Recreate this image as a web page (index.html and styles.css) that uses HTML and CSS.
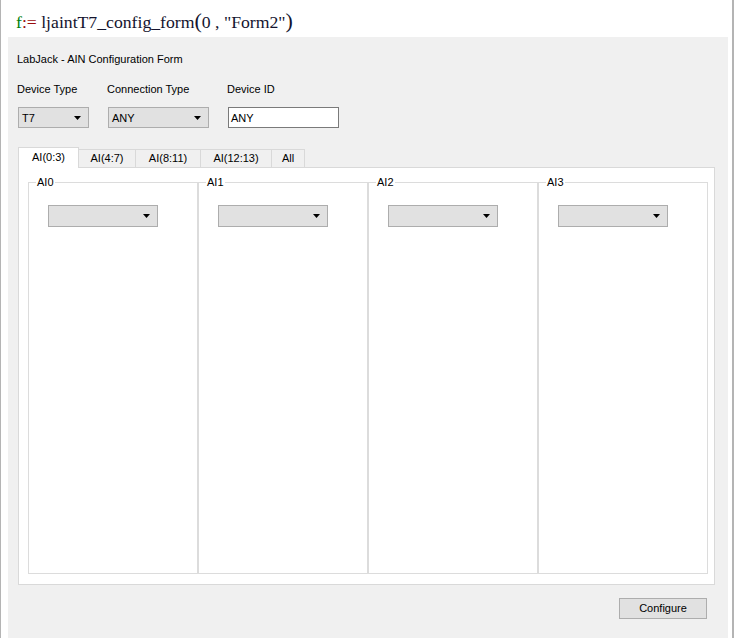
FILE: index.html
```html
<!DOCTYPE html>
<html lang="en">
<head>
    <meta charset="UTF-8">
    <title>LabJack AIN Configuration Form</title>
    <link rel="stylesheet" href="styles.css">
</head>
<body>
    <div class="sheet">
        <div class="region">
            <span class="var">f</span><span class="def">:=</span> ljaintT7_config_form<span class="paren">(</span>0 , "Form2"<span class="paren">)</span>
        </div>
        <div class="form">
            <div class="form-title">LabJack - AIN Configuration Form</div>
            <div class="fields">
                <div class="field col1">
                    <div class="label">Device Type</div>
                    <div class="combo small">
                        <span>T7</span>
                        <svg class="arrow" width="7" height="4" viewBox="0 0 7 4"><polygon points="0,0 7,0 3.5,4" fill="#000"/></svg>
                    </div>
                </div>
                <div class="field col2">
                    <div class="label">Connection Type</div>
                    <div class="combo medium">
                        <span>ANY</span>
                        <svg class="arrow" width="7" height="4" viewBox="0 0 7 4"><polygon points="0,0 7,0 3.5,4" fill="#000"/></svg>
                    </div>
                </div>
                <div class="field col3">
                    <div class="label">Device ID</div>
                    <div class="textbox">ANY</div>
                </div>
            </div>

            <div class="tabs">
                <div class="tab active" style="width: 61px">AI(0:3)</div>
                <div class="tab" style="width: 58px">AI(4:7)</div>
                <div class="tab" style="width: 66px">AI(8:11)</div>
                <div class="tab" style="width: 72px">AI(12:13)</div>
                <div class="tab" style="width: 34px">All</div>
            </div>
            <div class="tab-page">
                <fieldset class="group">
                    <legend>AI0</legend>
                    <div class="combo wide"><svg class="arrow" width="7" height="4" viewBox="0 0 7 4"><polygon points="0,0 7,0 3.5,4" fill="#000"/></svg></div>
                </fieldset>
                <fieldset class="group">
                    <legend>AI1</legend>
                    <div class="combo wide"><svg class="arrow" width="7" height="4" viewBox="0 0 7 4"><polygon points="0,0 7,0 3.5,4" fill="#000"/></svg></div>
                </fieldset>
                <fieldset class="group">
                    <legend>AI2</legend>
                    <div class="combo wide"><svg class="arrow" width="7" height="4" viewBox="0 0 7 4"><polygon points="0,0 7,0 3.5,4" fill="#000"/></svg></div>
                </fieldset>
                <fieldset class="group">
                    <legend>AI3</legend>
                    <div class="combo wide"><svg class="arrow" width="7" height="4" viewBox="0 0 7 4"><polygon points="0,0 7,0 3.5,4" fill="#000"/></svg></div>
                </fieldset>
            </div>
            <div class="actions">
                <div class="button">Configure</div>
            </div>
        </div>
    </div>
</body>
</html>
```

FILE: styles.css
```css
body {
    margin: 0;
    padding: 0;
    background: #fff;
    font-family: "Liberation Sans", Arial, sans-serif;
    font-size: 11px;
    color: #000;
}
.sheet {
    width: 731px;
    height: 638px;
    border-left: 1px solid #b4b4b4;
    border-right: 2px solid #b4b4b4;
    overflow: hidden;
}
.region {
    height: 37px;
    box-sizing: border-box;
    padding: 10px 0 0 15px;
    font-family: "Liberation Serif", "Times New Roman", serif;
    font-size: 17.7px;
    line-height: 22px;
    color: #14142e;
    white-space: nowrap;
}
.region .var {
    color: #00800a;
}
.region .def {
    color: #9a0c0c;
}
.region .paren {
    font-size: 22px;
}
.form {
    margin-left: 7px;
    width: 720px;
    height: 601px;
    box-sizing: border-box;
    padding: 16px 13px 0 10px;
    background: #f0f0f0;
}
.form-title {
    height: 13px;
    line-height: 13px;
    margin-left: -1px;
}
.fields {
    display: flex;
    margin-top: 17px;
    margin-left: -1px;
}
.field.col1 {
    width: 90px;
}
.field.col2 {
    width: 120px;
}
.label {
    height: 13px;
    line-height: 13px;
    margin-bottom: 11px;
}
.combo {
    position: relative;
    height: 21px;
    box-sizing: border-box;
    margin-left: 1px;
    padding-left: 3px;
    background: #e1e1e1;
    border: 1px solid #adadad;
    line-height: 20px;
}
.combo .arrow {
    position: absolute;
    right: 7px;
    top: 8px;
}
.combo.small {
    width: 71px;
}
.combo.medium {
    width: 101px;
}
.combo.wide {
    width: 110px;
    height: 22px;
    margin: 16px 0 0 19px;
}
.textbox {
    width: 111px;
    height: 21px;
    box-sizing: border-box;
    margin-left: 1px;
    padding-left: 2px;
    background: #fff;
    border: 1px solid #7a7a7a;
    line-height: 20px;
}
.tabs {
    display: flex;
    align-items: flex-end;
    margin-top: 19px;
    height: 20px;
}
.tab {
    height: 18px;
    box-sizing: border-box;
    border: 1px solid #d9d9d9;
    border-bottom: none;
    margin-left: -1px;
    text-align: center;
    line-height: 17px;
    background: #f0f0f0;
}
.tab.active {
    margin-left: 0;
    height: 21px;
    margin-bottom: -1px;
    background: #fff;
    position: relative;
    line-height: 19px;
    z-index: 1;
}
.tab-page {
    display: flex;
    width: 697px;
    height: 418px;
    box-sizing: border-box;
    padding: 8px 0 0 9px;
    background: #fff;
    border: 1px solid #d9d9d9;
}
.group {
    width: 170px;
    height: 398px;
    box-sizing: border-box;
    margin: 0;
    padding: 0;
    border: 1px solid #dcdcdc;
    min-width: 0;
}
.group legend {
    padding: 0 1px;
    margin-left: 7px;
    line-height: 13px;
}
.actions {
    display: flex;
    justify-content: flex-end;
    margin-top: 13px;
    padding-right: 8px;
}
.button {
    width: 88px;
    height: 21px;
    box-sizing: border-box;
    background: #e1e1e1;
    border: 1px solid #adadad;
    text-align: center;
    line-height: 19px;
}
```
